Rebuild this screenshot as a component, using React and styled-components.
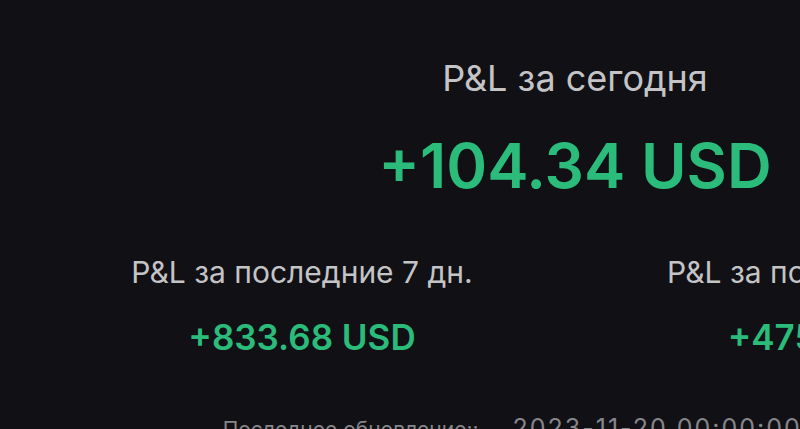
import React from "react";
import styled, { createGlobalStyle } from "styled-components";

const Global = createGlobalStyle`
  html, body {
    margin: 0;
    padding: 0;
    background: #111115;
    overflow: hidden;
  }
  body {
    font-family: Inter, "Noto Sans", sans-serif;
  }
`;

const Page = styled.div`
  width: 800px;
  height: 429px;
  overflow: hidden;
  background: #111115;
`;

const Panel = styled.div`
  width: 1092px;
  margin-left: 29px;
  padding-top: 53px;
  display: flex;
  flex-direction: column;
  align-items: center;
`;

const Title = styled.div`
  font-size: 36px;
  line-height: 50px;
  color: #c4c4c7;
  white-space: nowrap;
`;

const Amount = styled.div`
  margin-top: ${(p) => p.$top || 0}px;
  font-size: ${(p) => p.$size}px;
  line-height: ${(p) => p.$line}px;
  font-weight: 600;
  color: #2bbb7b;
  white-space: nowrap;
`;

const Periods = styled.div`
  margin-top: 46px;
  width: 100%;
  display: grid;
  grid-template-columns: 1fr 1fr;
`;

const Period = styled.div`
  display: flex;
  flex-direction: column;
  align-items: center;
  gap: 23px;
`;

const Label = styled.div`
  font-size: 30px;
  line-height: 40px;
  color: #c4c4c7;
  white-space: nowrap;
`;

const Updated = styled.div`
  margin-top: 54px;
  font-size: 21px;
  line-height: 30px;
  color: #85858b;
  white-space: nowrap;
`;

const Stamp = styled.span`
  margin-left: 34px;
  font-size: 25px;
  letter-spacing: 2px;
`;

const periods = [
  { label: "P&L за последние 7 дн.", value: "+833.68 USD" },
  { label: "P&L за последние 30 дн.", value: "+4753.21 USD" },
];

export default function App() {
  return (
    <Page>
      <Global />
      <Panel>
        <Title>P&amp;L за сегодня</Title>
        <Amount $size={62} $line={80} $top={23}>+104.34 USD</Amount>
        <Periods>
          {periods.map((p) => (
            <Period key={p.label}>
              <Label>{p.label}</Label>
              <Amount $size={35} $line={44}>{p.value}</Amount>
            </Period>
          ))}
        </Periods>
        <Updated>
          Последнее обновление::
          <Stamp>2023-11-20 00:00:00 (UTC+8)</Stamp>
        </Updated>
      </Panel>
    </Page>
  );
}
